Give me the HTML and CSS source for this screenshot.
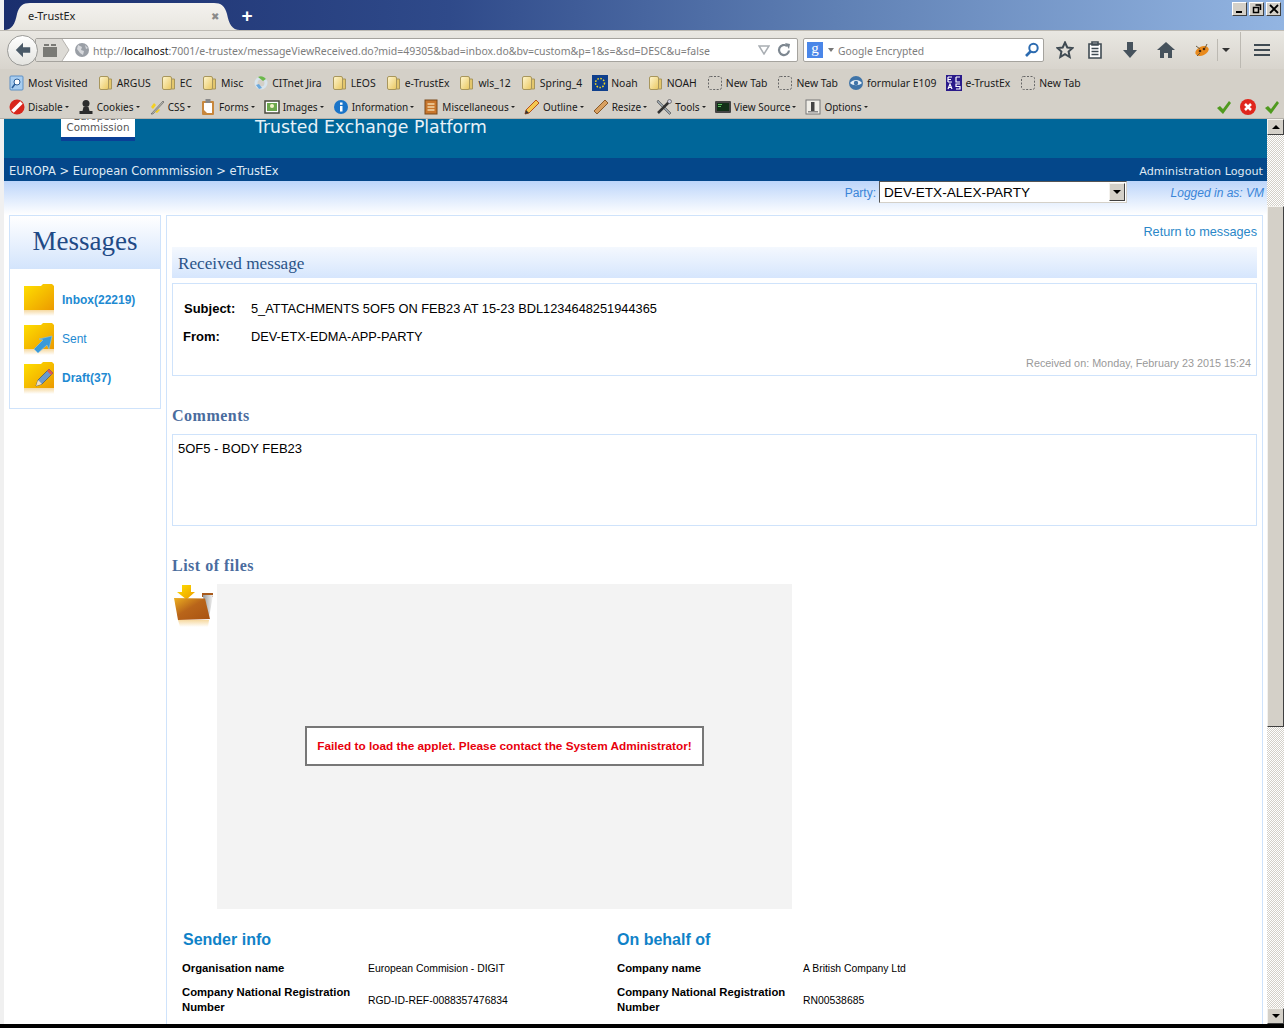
FILE: index.html
```html
<!DOCTYPE html>
<html lang="en">
  <head>
    <meta charset="UTF-8" />
    <title>e-TrustEx</title>
    <link rel="stylesheet" href="styles.css">
  </head>
  <body>
    <svg class="defs" width="0" height="0">
      <defs>
        <linearGradient id="gold" x1="0" y1="0" x2="1" y2="1">
          <stop offset="0" stop-color="#ffe000" /><stop offset="1" stop-color="#ec9a00" />
        </linearGradient>
        <linearGradient id="fade" x1="0" y1="0" x2="0" y2="1">
          <stop offset="0" stop-color="#f6d9a0" /><stop offset="1" stop-color="#ffffff" />
        </linearGradient>
        <linearGradient id="pale" x1="0" y1="0" x2="1" y2="1">
          <stop offset="0" stop-color="#fff6cf" /><stop offset="1" stop-color="#e9c75f" />
        </linearGradient>
        <linearGradient id="brown" x1="0" y1="0" x2="1" y2="1">
          <stop offset="0" stop-color="#eeb020" /><stop offset=".45" stop-color="#b9651a" /><stop offset="1" stop-color="#a85212" />
        </linearGradient>
        <linearGradient id="sheet" x1="0" y1="0" x2="1" y2="0">
          <stop offset="0" stop-color="#999999" /><stop offset="1" stop-color="#f4f4f4" />
        </linearGradient>
        <symbol id="bm-folder" viewBox="0 0 16 16">
          <path d="M10 4h3.500v10H10z" fill="#e3c66c" stroke="#a8965c" />
          <rect x="1.500" y="1.500" width="9" height="13" rx="1.500" fill="url(#pale)" stroke="#a8965c" />
        </symbol>
        <symbol id="bm-blank" viewBox="0 0 16 16">
          <rect x="1.500" y="1.500" width="13" height="13" rx="2" fill="none" stroke="#666" stroke-dasharray="2 1.500" />
        </symbol>
        <symbol id="big-folder" viewBox="0 0 30 36">
          <path d="M0 3h17l2-2h9l2 2v24H0z" fill="url(#gold)" />
          <rect y="27" width="30" height="6" fill="url(#fade)" />
        </symbol>
      </defs>
    </svg>

    <div class="titlebar">
      <div class="tab">
        <span class="tab-title">e-TrustEx</span>
        <span class="tab-close">✖</span>
      </div>
      <span class="tab-new">+</span>
      <div class="winbtns">
        <span class="winbtn"><i class="min"></i></span>
        <span class="winbtn"><svg width="10" height="10" viewBox="0 0 10 10"><path d="M3.500 1h5v5M1.500 3.500h5v5h-5z" fill="none" stroke="#000" stroke-width="1.500" /></svg></span>
        <span class="winbtn"><svg width="10" height="10" viewBox="0 0 10 10"><path d="M1 1l8 8M9 1l-8 8" stroke="#000" stroke-width="1.800" /></svg></span>
      </div>
    </div>

    <div class="navbar">
      <span class="back">
        <svg width="18" height="18" viewBox="0 0 20 20"><path d="M10 2l-8 8 8 8v-5h8V7h-8z" fill="#4a5a68" /></svg>
      </span>
      <div class="urlbar">
        <svg class="url-left" width="34" height="22" viewBox="0 0 34 22">
          <path d="M0 0h26l7 11-7 11H0z" fill="#dddbd6" />
          <path d="M26 0l7 11-7 11" fill="none" stroke="#b5b3ae" />
          <path d="M7 8h14v10H7zM8 5h5v2H8zM15 5h5v2h-5z" fill="#7a7a76" />
        </svg>
        <svg width="16" height="16" viewBox="0 0 16 16"><circle cx="8" cy="8" r="7" fill="#9a9fa6" /><path d="M4 3l4 2-1 3 3 1-1 4-3-2-3-4zM11 3l3 3-2 1z" fill="#d6d8dc" /></svg>
        <span class="url"><span class="dim">http://</span><b>localhost</b><span class="dim">:7001/e-trustex/messageViewReceived.do?mid=49305&amp;bad=inbox.do&amp;bv=custom&amp;p=1&amp;s=&amp;sd=DESC&amp;u=false</span></span>
        <svg class="url-drop" width="12" height="10" viewBox="0 0 12 10"><path d="M1 1h10L6 9z" fill="none" stroke="#a9aeb3" stroke-width="1.500" /></svg>
        <svg width="16" height="16" viewBox="0 0 16 16"><path d="M13 8.500A5 5 0 1 1 11 4" fill="none" stroke="#7d8790" stroke-width="2.200" /><path d="M9 1l5 1-1 5z" fill="#7d8790" /></svg>
      </div>
      <div class="searchbar">
        <span class="g-badge">g</span>
        <i class="caret"></i>
        <span class="search-text">Google Encrypted</span>
        <svg width="16" height="16" viewBox="0 0 16 16"><circle cx="9.500" cy="6" r="4.200" fill="none" stroke="#2c6bb0" stroke-width="2" /><path d="M6.500 9.500L2 14" stroke="#2c6bb0" stroke-width="2.600" /></svg>
      </div>
      <div class="nav-tools">
        <svg width="18" height="18" viewBox="0 0 18 18"><path d="M9 1.500l2.300 5 5.200.6-3.900 3.500 1.100 5.400L9 13.200 4.300 16l1.100-5.400L1.500 7.100l5.200-.6z" fill="none" stroke="#3f4a52" stroke-width="2" /></svg>
        <svg class="t-list" width="16" height="18" viewBox="0 0 16 18"><path d="M2 3h12v14H2zM5 1h6v3H5z" fill="#fff" stroke="#3f4a52" stroke-width="1.600" /><path d="M4.500 7.500h7M4.500 10.500h7M4.500 13.500h7" stroke="#3f4a52" stroke-width="1.400" /></svg>
        <svg class="t-down" width="16" height="18" viewBox="0 0 16 18"><path d="M5 1h6v8h4l-7 8-7-8h4z" fill="#46525c" /></svg>
        <svg class="t-home" width="18" height="16" viewBox="0 0 18 16"><path d="M9 0L0 8h3v8h4v-5h4v5h4V8h3z" fill="#46525c" /></svg>
        <svg class="t-bug" width="18" height="16" viewBox="0 0 18 16"><ellipse cx="9" cy="9" rx="7" ry="4.500" transform="rotate(-25 9 9)" fill="#e98a1c" /><circle cx="7" cy="9" r="1.300" fill="#4a2a10" /><circle cx="11" cy="7" r="1.300" fill="#4a2a10" /><path d="M3 4l4 3M14 2l-2 4M4 14l3-3" stroke="#6a5a40" /></svg>
        <i class="t-sep"></i>
        <i class="caret dark"></i>
        <i class="t-sep tall"></i>
        <span class="burger"><i></i><i></i><i></i></span>
      </div>
    </div>

    <div class="bookmarks">
      <span class="bm"><svg width="16" height="16" viewBox="0 0 16 16"><rect x="1" y="1" width="13" height="14" rx="1" fill="#a8cdf0" stroke="#5c8fc4" /><circle cx="8" cy="7" r="3" fill="#fff" stroke="#2a5d98" /><path d="M6 9l-3 4" stroke="#2a5d98" stroke-width="1.500" /></svg>Most Visited</span>
      <span class="bm"><svg width="16" height="16"><use href="#bm-folder" /></svg>ARGUS</span>
      <span class="bm"><svg width="16" height="16"><use href="#bm-folder" /></svg>EC</span>
      <span class="bm"><svg width="16" height="16"><use href="#bm-folder" /></svg>Misc</span>
      <span class="bm"><svg width="16" height="16" viewBox="0 0 16 16"><circle cx="8" cy="8" r="5" fill="none" stroke="#d8e4ec" stroke-width="3" /><path d="M5 2a6 6 0 0 1 8 2l-3 2z" fill="#6cb84a" /><path d="M3 10l3 4 3-1-3-4z" fill="#6aa8dc" /></svg>CITnet Jira</span>
      <span class="bm"><svg width="16" height="16"><use href="#bm-folder" /></svg>LEOS</span>
      <span class="bm"><svg width="16" height="16"><use href="#bm-folder" /></svg>e-TrustEx</span>
      <span class="bm"><svg width="16" height="16"><use href="#bm-folder" /></svg>wls_12</span>
      <span class="bm"><svg width="16" height="16"><use href="#bm-folder" /></svg>Spring_4</span>
      <span class="bm"><svg width="16" height="16" viewBox="0 0 16 16"><rect width="16" height="16" fill="#0f3f8c" /><circle cx="8" cy="8" r="4.500" fill="none" stroke="#f4d820" stroke-width="1.500" stroke-dasharray="1.500 1.500" /></svg>Noah</span>
      <span class="bm"><svg width="16" height="16"><use href="#bm-folder" /></svg>NOAH</span>
      <span class="bm"><svg width="16" height="16"><use href="#bm-blank" /></svg>New Tab</span>
      <span class="bm"><svg width="16" height="16"><use href="#bm-blank" /></svg>New Tab</span>
      <span class="bm"><svg width="16" height="16" viewBox="0 0 16 16"><circle cx="8" cy="8" r="7" fill="#3f74a8" /><path d="M2 8c3-4 9-4 12 0-3 3-9 3-12 0z" fill="#e8f0f6" /><circle cx="8" cy="8" r="2.200" fill="#3f74a8" /></svg>formular E109</span>
      <span class="bm"><svg width="16" height="16" viewBox="0 0 16 16"><rect width="16" height="16" fill="#2a1a8a" /><path d="M2 2h4M2 2v5M2 4.500h3M2 7h4M10 2h4M10 2v5h4M2 14l2-5 2 5M3 12.500h2M14 9h-4v2.500h4V14h-4" fill="none" stroke="#fff" stroke-width="1.200" /></svg>e-TrustEx</span>
      <span class="bm"><svg width="16" height="16"><use href="#bm-blank" /></svg>New Tab</span>
    </div>

    <div class="addons">
      <span class="tool"><svg width="16" height="16" viewBox="0 0 16 16"><circle cx="8" cy="8" r="7.500" fill="#d8261c" /><path d="M3.500 12.500l9-9" stroke="#fff" stroke-width="3.500" /></svg>Disable<i></i></span>
      <span class="tool"><svg width="16" height="16" viewBox="0 0 16 16"><circle cx="8" cy="4.500" r="3.500" fill="#2c2c2c" /><path d="M5.500 8h5l1 4h3v3h-13v-3h3z" fill="#2c2c2c" /></svg>Cookies<i></i></span>
      <span class="tool"><svg width="16" height="16" viewBox="0 0 16 16"><path d="M2 15L14 2l1 1L4 15z" fill="#b8b8b0" stroke="#555" stroke-width=".6" /><path d="M2 8l3-4 2 2-3 4zM6 13l4-3 1 1-3 3z" fill="#f4d020" /></svg>CSS<i></i></span>
      <span class="tool"><svg width="16" height="16" viewBox="0 0 16 16"><rect x="2" y="2" width="12" height="14" rx="1" fill="#c8873c" /><path d="M4 4h8v10H7l-3-3z" fill="#fff" /><rect x="5.500" y="0" width="5" height="4" fill="#888" /></svg>Forms<i></i></span>
      <span class="tool"><svg width="16" height="16" viewBox="0 0 16 16"><rect x="1" y="2" width="14" height="12" fill="#fff" stroke="#4a4a3c" stroke-width="1.500" /><rect x="3" y="4" width="10" height="8" fill="#6ca84c" /><circle cx="8" cy="7" r="2" fill="#f2f2c8" /></svg>Images<i></i></span>
      <span class="tool"><svg width="16" height="16" viewBox="0 0 16 16"><circle cx="8" cy="8" r="7" fill="#1a74c8" /><rect x="7" y="7" width="2.500" height="5.500" fill="#fff" /><rect x="7" y="3.500" width="2.500" height="2.300" fill="#fff" /></svg>Information<i></i></span>
      <span class="tool"><svg width="16" height="16" viewBox="0 0 16 16"><rect x="2" y="1" width="12" height="14" fill="#c8762c" stroke="#7c4a1a" /><path d="M4.500 5h7M4.500 8h7M4.500 11h7" stroke="#f4d8a8" stroke-width="1.500" /></svg>Miscellaneous<i></i></span>
      <span class="tool"><svg width="16" height="16" viewBox="0 0 16 16"><path d="M1 15l1-4L12 1l3 3L5 14z" fill="#f4c850" stroke="#b8501c" /><path d="M1 15l1-4 3 3z" fill="#333" /></svg>Outline<i></i></span>
      <span class="tool"><svg width="16" height="16" viewBox="0 0 16 16"><path d="M1 12L12 1l3 3L4 15z" fill="#d8a060" stroke="#8a5a28" /></svg>Resize<i></i></span>
      <span class="tool"><svg width="16" height="16" viewBox="0 0 16 16"><path d="M2 1l13 13-1.500 1.500L1 3z" fill="#9aa4ac" stroke="#444" stroke-width=".6" /><path d="M14 2l-12 12" stroke="#333" stroke-width="2.500" /><circle cx="13.500" cy="2.500" r="2" fill="#ccd" stroke="#444" stroke-width=".6" /></svg>Tools<i></i></span>
      <span class="tool"><svg width="16" height="16" viewBox="0 0 16 16"><rect x="0" y="2" width="16" height="12" rx="1" fill="#444" /><rect x="2" y="4" width="12" height="8" fill="#123018" /><path d="M3 5.500h4M3 7.500h3" stroke="#5cc060" /></svg>View Source<i></i></span>
      <span class="tool"><svg width="16" height="16" viewBox="0 0 16 16"><rect x="1" y="1" width="14" height="14" fill="#f0eee8" stroke="#777" /><rect x="6" y="3" width="3.500" height="10" fill="#444" /><rect x="3" y="12" width="10" height="1.500" fill="#888" /></svg>Options<i></i></span>
      <span class="status">
        <svg width="16" height="16" viewBox="0 0 16 16"><path d="M1 9l3-2 3 3 6-8 2 2-8 11z" fill="#4f9a1f" /></svg>
        <svg width="16" height="16" viewBox="0 0 16 16"><circle cx="8" cy="8" r="8" fill="#e0261c" /><path d="M5 5l6 6M11 5l-6 6" stroke="#fff" stroke-width="2.500" /></svg>
        <svg width="16" height="16" viewBox="0 0 16 16"><path d="M1 9l3-2 3 3 6-8 2 2-8 11z" fill="#4f9a1f" /></svg>
      </span>
    </div>

    <div class="viewport">
      <div class="page">
        <div class="masthead">
          <div class="logo"><span class="logo-cut">European</span><span>Commission</span></div>
          <div class="site-title">Trusted Exchange Platform</div>
        </div>
        <div class="crumbs">
          <span>EUROPA &gt; European Commmission &gt; eTrustEx</span>
          <span class="crumb-links">Administration Logout</span>
        </div>
        <div class="partybar">
          <label class="party-label">Party:</label>
          <div class="party-select">
            <span>DEV-ETX-ALEX-PARTY</span>
            <span class="arrow-btn"><i class="tri down"></i></span>
          </div>
          <span class="logged">Logged in as: VM</span>
        </div>

        <div class="columns">
          <div class="sidebar">
            <h2 class="side-title">Messages</h2>
            <ul class="folders">
              <li>
                <svg width="30" height="36"><use href="#big-folder" /></svg>
                <a class="strong">Inbox(22219)</a>
              </li>
              <li>
                <svg width="30" height="36" viewBox="0 0 30 36"><use href="#big-folder" /><path d="M10 27l9-9-4-1 13-3-3 13-2-4-9 8z" fill="#3a9ad8" stroke="#8cc4ec" stroke-width=".6" /></svg>
                <a>Sent</a>
              </li>
              <li>
                <svg width="30" height="36" viewBox="0 0 30 36"><use href="#big-folder" /><path d="M12 25l2-6 11-11 4 4-11 11z" fill="#6a9ad0" stroke="#456" stroke-width=".7" /><path d="M25 8l4 4 -2 2-4-4z" fill="#e05a50" /><path d="M12 25l2-6 4 4z" fill="#f3e0c0" /></svg>
                <a class="strong">Draft(37)</a>
              </li>
            </ul>
          </div>

          <div class="main">
            <a class="return">Return to messages</a>
            <h3 class="bar-title">Received message</h3>
            <div class="box msg-box">
              <div class="msg-row subject"><b>Subject:</b><span>5_ATTACHMENTS 5OF5 ON FEB23 AT 15-23 BDL1234648251944365</span></div>
              <div class="msg-row from"><b>From:</b><span>DEV-ETX-EDMA-APP-PARTY</span></div>
              <div class="received">Received on: Monday, February 23 2015 15:24</div>
            </div>

            <h4 class="section comments-head">Comments</h4>
            <div class="box comment-box">5OF5 - BODY FEB23</div>

            <h4 class="section files-head">List of files</h4>
            <div class="files">
              <svg class="files-icon" width="45" height="48" viewBox="0 0 45 48">
                <path d="M10 1h9v7h4l-8.500 7.500L5 8h5z" fill="url(#gold)" />
                <path d="M30 9h11v4H30z" fill="#a85a1c" />
                <path d="M31 11h10l-4 23h-4z" fill="url(#sheet)" />
                <path d="M2 14l31 .5L38 35 6 36z" fill="url(#brown)" />
                <path d="M6 36h31l-1 7H8z" fill="url(#fade)" />
              </svg>
              <div class="applet">
                <div class="applet-error">Failed to load the applet. Please contact the System Administrator!</div>
              </div>
            </div>

            <div class="info">
              <div class="info-col">
                <h4 class="info-title">Sender info</h4>
                <div class="info-row"><b>Organisation name</b><span>European Commision - DIGIT</span></div>
                <div class="info-row"><b>Company National Registration Number</b><span>RGD-ID-REF-0088357476834</span></div>
              </div>
              <div class="info-col">
                <h4 class="info-title behalf">On behalf of</h4>
                <div class="info-row"><b>Company name</b><span>A British Company Ltd</span></div>
                <div class="info-row"><b>Company National Registration Number</b><span>RN00538685</span></div>
              </div>
            </div>
          </div>
        </div>
      </div>

      <div class="scrollbar">
        <span class="sb-btn"><i class="tri up"></i></span>
        <div class="sb-track"><div class="sb-thumb"></div></div>
        <span class="sb-btn"><i class="tri down"></i></span>
      </div>
    </div>
  </body>
</html>
```

FILE: styles.css
```css
* {
  box-sizing: border-box;
}

html,
body {
  height: 100%;
}

body {
  margin: 0;
  width: 1284px;
  height: 1028px;
  overflow: hidden;
  display: flex;
  flex-direction: column;
  font-family: "Liberation Sans", Arial, sans-serif;
  font-size: 12px;
  color: #000;
  background: #000;
}

.defs {
  position: absolute;
}

svg {
  flex: none;
  display: block;
}

/* browser chrome */
.titlebar {
  height: 30px;
  flex: none;
  display: flex;
  align-items: flex-end;
  padding-left: 4px;
  background: linear-gradient(90deg, #f2f2f2 0, #f2f2f2 4px, #1b2f6e 4px, #2f4a8a 35%, #5f80b4 65%, #93b5e2 100%);
}

.tab {
  width: 236px;
  height: 27px;
  display: flex;
  align-items: center;
  justify-content: space-between;
  padding: 0 21px 2px 24px;
  background: linear-gradient(#f4f2ee, #e8e6e0);
  clip-path: path("M0 27C8 27 11 21 13 11C15 3 19 0 26 0H210C217 0 221 3 223 11C225 21 228 27 236 27Z");
  font-family: "Noto Sans", sans-serif;
  font-size: 11px;
  color: #222;
}

.tab-close {
  font-size: 10px;
  color: #8a8a8a;
}

.tab-new {
  width: 14px;
  padding-bottom: 3px;
  color: #fff;
  font-size: 19px;
  font-weight: bold;
  line-height: 22px;
  text-align: center;
}

.winbtns {
  margin-left: auto;
  align-self: flex-start;
  display: flex;
  gap: 2px;
  padding: 2px 3px 0 0;
}

.winbtn {
  width: 15px;
  height: 14px;
  display: flex;
  align-items: center;
  justify-content: center;
  background: #d4d0c8;
  border: 1px solid;
  border-color: #fff #404040 #404040 #fff;
}

.min {
  width: 6px;
  height: 2px;
  margin-top: 6px;
  margin-right: 2px;
  background: #000;
}

.navbar {
  height: 39px;
  flex: none;
  display: flex;
  align-items: center;
  padding-left: 7px;
  background: linear-gradient(#e9e7e2, #d8d4cd);
  border-top: 1px solid #bdbab3;
}

.back {
  width: 31px;
  height: 31px;
  position: relative;
  z-index: 1;
  display: flex;
  align-items: center;
  justify-content: center;
  background: linear-gradient(#fff, #e4e4e0);
  border: 1px solid #9b9b98;
  border-radius: 50%;
}

.urlbar {
  width: 763px;
  height: 24px;
  margin-left: -3px;
  padding-right: 5px;
  display: flex;
  align-items: center;
  gap: 3px;
  background: #fff;
  border: 1px solid #a5a39e;
  border-radius: 2px;
}

.url-left {
  margin-right: 1px;
}

.url {
  flex: 1;
  padding-top: 1px;
  white-space: nowrap;
  overflow: hidden;
  font-family: "Noto Sans", sans-serif;
  font-size: 10.5px;
  color: #222;
}

.url b {
  font-weight: normal;
  color: #111;
}

.dim {
  color: #7d7d7d;
}

.url-drop {
  margin-right: 3px;
}

.searchbar {
  width: 241px;
  height: 24px;
  margin-left: 5px;
  padding: 0 3px;
  display: flex;
  align-items: center;
  background: #fff;
  border: 1px solid #a5a39e;
  border-radius: 2px;
}

.g-badge {
  width: 16px;
  height: 16px;
  background: #4a86e8;
  color: #fff;
  font-family: "Liberation Serif", serif;
  font-size: 15px;
  line-height: 13px;
  text-align: center;
}

.caret {
  width: 0;
  height: 0;
  margin: 0 4px 0 5px;
  border: 3px solid transparent;
  border-top: 4px solid #777;
  border-bottom: 0;
}

.caret.dark {
  margin: 0;
  border-width: 4px;
  border-top: 4px solid #333;
  border-bottom: 0;
}

.search-text {
  flex: 1;
  padding-top: 1px;
  font-family: "Noto Sans", sans-serif;
  font-size: 10.3px;
  color: #7d7d7d;
}

.nav-tools {
  flex: 1;
  display: flex;
  align-items: center;
  padding-left: 12px;
}

.t-list {
  margin-left: 13px;
}

.t-down {
  margin-left: 19px;
}

.t-home {
  margin-left: 19px;
}

.t-bug {
  margin-left: 18px;
}

.t-sep {
  width: 1px;
  height: 22px;
  margin: 0 4px 0 6px;
  background: #bcb9b2;
}

.t-sep.tall {
  height: 36px;
  margin: 0 13px 0 10px;
}

.burger {
  display: flex;
  flex-direction: column;
  gap: 3px;
}

.burger i {
  display: block;
  width: 16px;
  height: 2px;
  background: #3f4a52;
}

.bookmarks,
.addons {
  flex: none;
  display: flex;
  align-items: center;
  padding-left: 9px;
  background: #d4d0c8;
  font-family: "Noto Sans", sans-serif;
  color: #1a1a1a;
  white-space: nowrap;
}

.bookmarks {
  height: 26px;
  padding-top: 2px;
  gap: 10px;
  font-size: 10.4px;
}

.addons {
  height: 24px;
  gap: 9.1px;
  font-size: 10px;
  border-bottom: 1px solid #b5b2ab;
}

.bm,
.tool {
  display: flex;
  align-items: center;
  gap: 3px;
}

.tool i {
  width: 0;
  height: 0;
  margin-left: -1px;
  border: 2px solid transparent;
  border-top: 2px solid #222;
  border-bottom: 0;
}

.status {
  margin-left: auto;
  display: flex;
  gap: 8px;
  padding-right: 4px;
}

/* page */
.viewport {
  height: 905px;
  flex: none;
  display: flex;
  background: #fff;
}

.page {
  width: 1267px;
  overflow: hidden;
  padding-left: 4px;
  background: linear-gradient(90deg, #f0f0f0 0, #f0f0f0 4px, #fff 4px);
}

.masthead {
  height: 39px;
  display: flex;
  align-items: flex-start;
  overflow: hidden;
  background: #006699;
}

.logo {
  width: 74px;
  height: 22px;
  margin-left: 57px;
  display: flex;
  flex-direction: column;
  justify-content: flex-end;
  align-items: center;
  background: #fff;
  border-bottom: 4px solid #0a3f96;
  color: #555;
  font-family: "DejaVu Sans", sans-serif;
  font-size: 10.3px;
  line-height: 11px;
  overflow: hidden;
  padding-bottom: 4px;
}

.logo-cut {
  flex: none;
}

.site-title {
  margin-left: 120px;
  color: #e8f2f8;
  font-family: "DejaVu Sans", sans-serif;
  font-size: 17.3px;
  line-height: 16px;
}

.crumbs {
  height: 23px;
  display: flex;
  align-items: center;
  justify-content: space-between;
  padding: 3px 4px 0 5px;
  background: #04478a;
  color: #dfe9f4;
  font-family: "DejaVu Sans", sans-serif;
  font-size: 11.5px;
}

.crumb-links {
  font-size: 11.2px;
}

.partybar {
  height: 34px;
  display: flex;
  align-items: flex-start;
  padding-right: 3px;
  background: linear-gradient(#bcd5fa, #fff);
}

.party-label {
  margin-left: auto;
  padding-top: 5px;
  color: #3a85d8;
}

.party-select {
  width: 248px;
  height: 22px;
  margin-left: 3px;
  padding: 1px 1px 1px 4px;
  display: flex;
  align-items: center;
  justify-content: space-between;
  background: #fff;
  border: 1px solid;
  border-color: #555 #d4d0c8 #d4d0c8 #555;
  font-size: 13.6px;
}

.arrow-btn,
.sb-btn {
  display: flex;
  align-items: center;
  justify-content: center;
  background: #d4d0c8;
  border: 1px solid;
  border-color: #f4f2ee #404040 #404040 #f4f2ee;
}

.arrow-btn {
  width: 16px;
  height: 18px;
}

.tri {
  width: 0;
  height: 0;
  border: 4px solid transparent;
}

.tri.down {
  border-top: 4px solid #000;
  border-bottom: 0;
}

.tri.up {
  border-bottom: 4px solid #000;
  border-top: 0;
}

.logged {
  width: 137px;
  padding-top: 5px;
  color: #3a85d8;
  font-style: italic;
  text-align: right;
}

.columns {
  display: flex;
  align-items: flex-start;
  gap: 5px;
  padding-left: 5px;
}

.sidebar {
  width: 152px;
  height: 194px;
  flex: none;
  border: 1px solid #cfe3fb;
}

.side-title {
  height: 53px;
  margin: 0;
  padding-top: 10px;
  background: linear-gradient(#fff, #d3e4fc);
  color: #1f4a86;
  font-family: "Liberation Serif", serif;
  font-size: 27px;
  font-weight: normal;
  line-height: 31px;
  text-align: center;
}

.folders {
  margin: 0;
  padding: 14px 0 0 14px;
  list-style: none;
}

.folders li {
  height: 39px;
  display: flex;
  align-items: flex-start;
  gap: 8px;
}

.folders a {
  margin-top: 10px;
  color: #1e8ad2;
}

.folders a.strong {
  font-weight: bold;
}

.main {
  width: 1097px;
  min-height: 900px;
  padding: 0 5px;
  border: 1px solid #cfe3fb;
  border-bottom: 0;
}

.return {
  display: block;
  height: 31px;
  padding: 9px 0 0;
  color: #2a87c8;
  font-size: 12.7px;
  text-align: right;
}

.bar-title {
  height: 31px;
  margin: 0;
  padding-left: 6px;
  background: linear-gradient(#f4f8fe, #d6e6fd);
  color: #2a5488;
  font-family: "Liberation Serif", serif;
  font-size: 17.2px;
  font-weight: normal;
  line-height: 33px;
}

.box {
  border: 1px solid #cfe3fb;
}

.msg-box {
  height: 93px;
  margin-top: 5px;
  padding-top: 18px;
}

.msg-row {
  display: flex;
  font-size: 12.8px;
  line-height: 14px;
}

.msg-row b {
  width: 67px;
  font-size: 13px;
}

.subject {
  padding-left: 11px;
}

.from {
  margin-top: 14px;
  padding-left: 10px;
}

.from b {
  width: 68px;
}

.received {
  margin-top: 13px;
  padding-right: 5px;
  color: #999;
  font-size: 10.8px;
  text-align: right;
}

.section {
  margin: 0;
  color: #4a6c9e;
  font-family: "Liberation Serif", serif;
  font-size: 16px;
  font-weight: bold;
  letter-spacing: .5px;
  line-height: 18px;
}

.comments-head {
  margin-top: 31px;
}

.comment-box {
  height: 92px;
  margin-top: 9px;
  padding: 6px 5px;
  font-size: 13px;
}

.files-head {
  margin-top: 31px;
}

.files {
  margin-top: 9px;
  display: flex;
}

.applet {
  width: 575px;
  height: 325px;
  display: flex;
  align-items: center;
  justify-content: center;
  background: #f3f3f3;
}

.applet-error {
  width: 399px;
  height: 40px;
  margin-top: -2px;
  display: flex;
  align-items: center;
  justify-content: center;
  background: #fff;
  border: 2px solid #777;
  color: #e8000c;
  font-weight: bold;
  font-size: 11.8px;
}

.info {
  display: flex;
  margin-top: 22px;
  padding-left: 10px;
}

.info-col {
  width: 435px;
}

.info-title {
  margin: 0 0 7px 1px;
  color: #0f82c8;
  font-size: 16px;
  line-height: 18px;
}

.info-title.behalf {
  margin-left: 0;
}

.info-row {
  display: flex;
  align-items: center;
  min-height: 24px;
  font-size: 10.4px;
  line-height: 15px;
}

.info-row + .info-row {
  margin-top: 5px;
}

.info-row b {
  width: 186px;
  padding-right: 10px;
  flex: none;
  font-size: 11.3px;
}

/* window scrollbar */
.scrollbar {
  width: 17px;
  display: flex;
  flex-direction: column;
  background: #d4d0c8;
}

.sb-btn {
  height: 16px;
  flex: none;
}

.sb-track {
  flex: 1;
  background: repeating-conic-gradient(#d4d0c8 0 25%, #fff 0 50%) 0 0 / 2px 2px;
  padding-top: 71px;
}

.sb-thumb {
  height: 521px;
  background: #d4d0c8;
  border: 1px solid;
  border-color: #f4f2ee #404040 #404040 #f4f2ee;
}
```
